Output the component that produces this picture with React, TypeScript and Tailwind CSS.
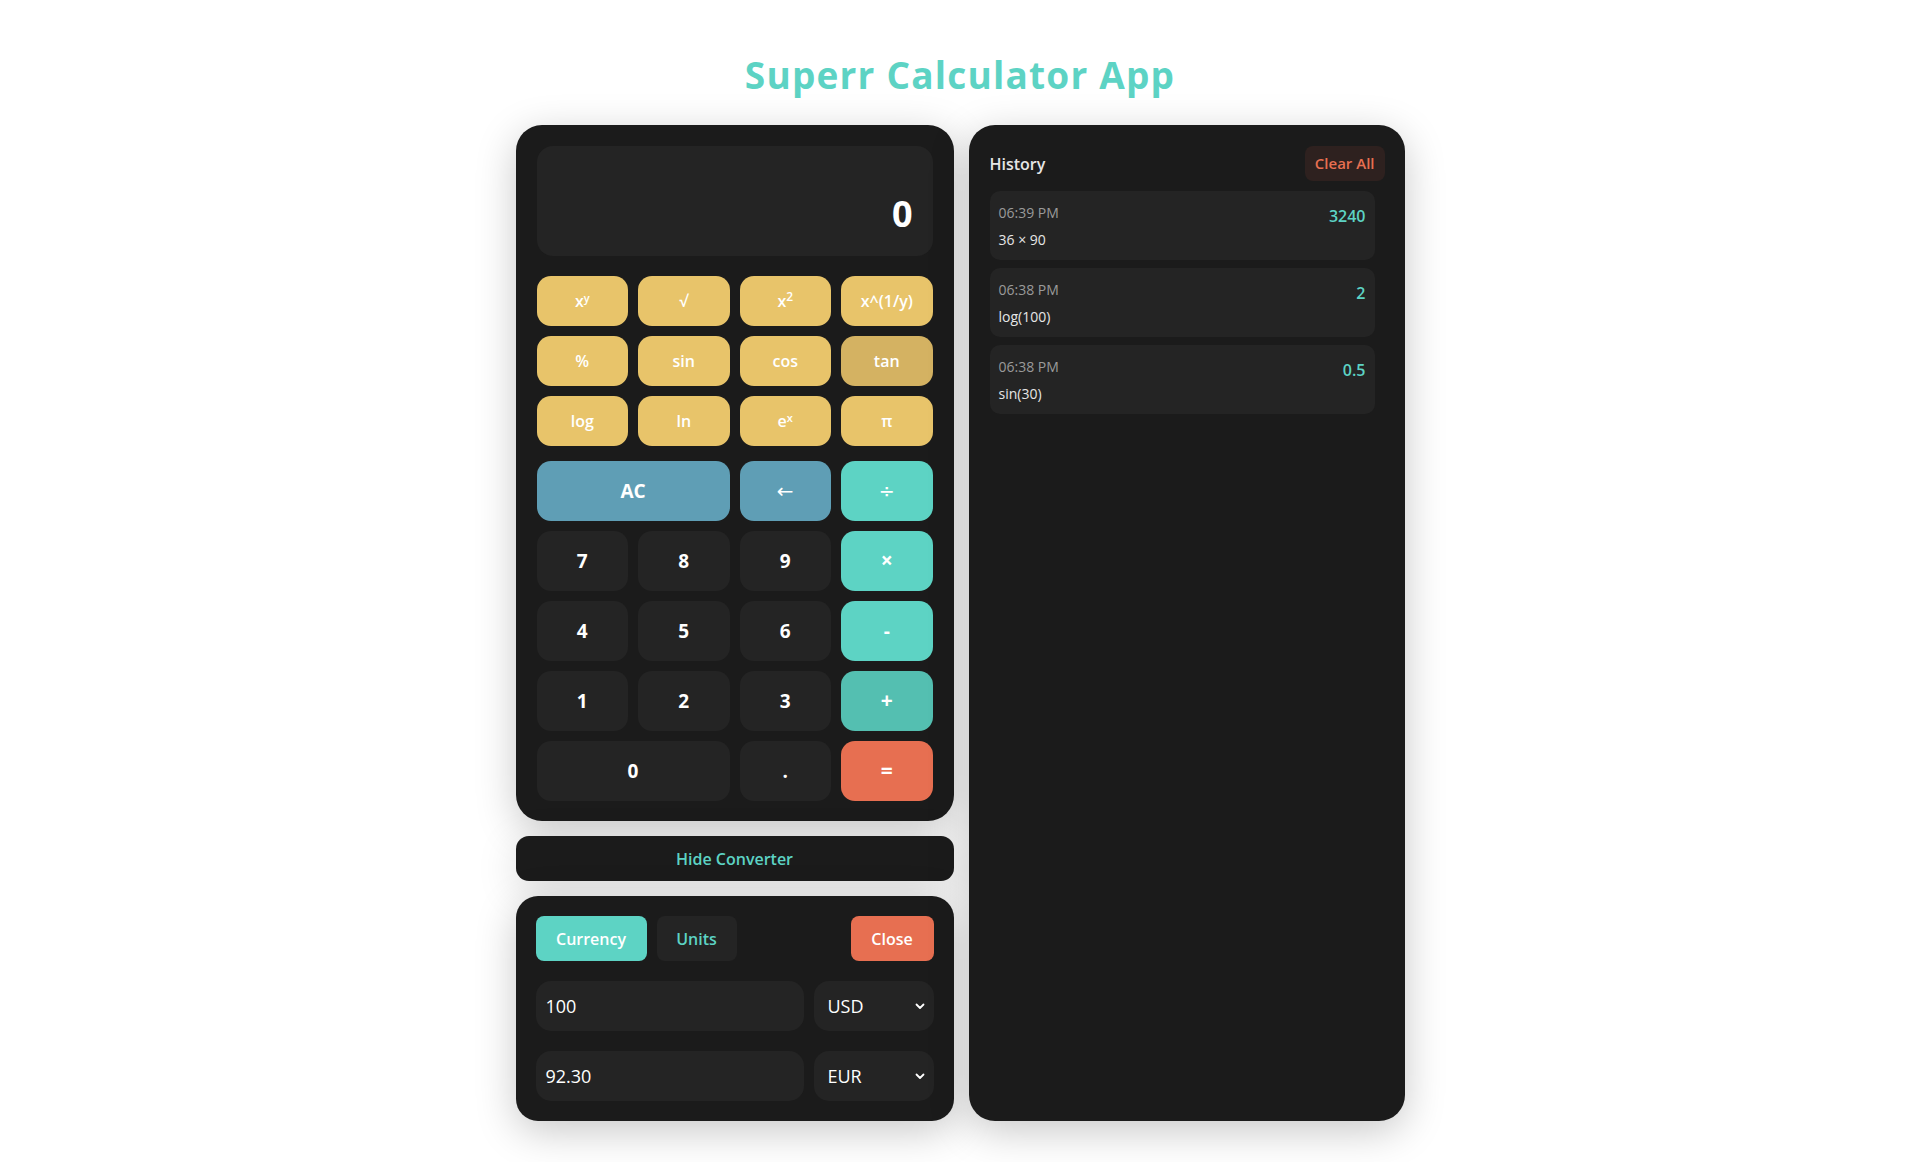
import React from "react";

const font = { fontFamily: '"Open Sans", "Noto Sans", sans-serif' };

function Btn({ children, cls }: { children: React.ReactNode; cls: string }) {
  return (
    <button className={`flex items-center justify-center rounded-[14px] ${cls}`}>{children}</button>
  );
}

const yellow = "h-[50px] bg-[#e8c46a] text-white font-semibold text-[16px]";
const num = "h-[60px] bg-[#242424] text-white font-bold text-[19px]";
const chevron = (
  <svg width="12" height="12" viewBox="0 0 12 12">
    <path d="M2.5 4.5 L6 8 L9.5 4.5" stroke="white" strokeWidth="1.8" fill="none" strokeLinecap="round" strokeLinejoin="round" />
  </svg>
);

export default function App() {
  return (
    <div className="min-h-[1162px] bg-white flex flex-col items-center" style={font}>
      <h1 className="mt-[45px] h-[60px] text-[37px] font-bold text-[#5dd3c4] tracking-[1.2px] leading-[60px]">
        Superr Calculator App
      </h1>
      <div className="mt-[20px] flex gap-[15px]">
        <div className="w-[438px] flex flex-col gap-[15px]">
          <div className="rounded-[26px] bg-[#1b1b1b] p-[21px] pb-[20px] shadow-[0_10px_40px_rgba(0,0,0,0.22)]">
            <div className="h-[110px] rounded-[16px] bg-[#242424] flex items-end justify-end px-[20px] pb-[24px]">
              <span className="text-[36px] font-bold text-white leading-none">0</span>
            </div>
            <div className="mt-[20px] grid grid-cols-4 gap-[10px]">
              <Btn cls={yellow}>
                <span>x<sup className="text-[11px]">y</sup></span>
              </Btn>
              <Btn cls={yellow}>√</Btn>
              <Btn cls={yellow}>
                <span>x<sup className="text-[12px]">2</sup></span>
              </Btn>
              <Btn cls={yellow}>x^(1/y)</Btn>
              <Btn cls={yellow}>%</Btn>
              <Btn cls={yellow}>sin</Btn>
              <Btn cls={yellow}>cos</Btn>
              <Btn cls="h-[50px] bg-[#d4b262] text-white font-semibold text-[16px]">tan</Btn>
              <Btn cls={yellow}>log</Btn>
              <Btn cls={yellow}>ln</Btn>
              <Btn cls={yellow}>
                <span>e<sup className="text-[11px]">x</sup></span>
              </Btn>
              <Btn cls={yellow}>π</Btn>
            </div>
            <div className="mt-[15px] grid grid-cols-4 gap-[10px]">
              <Btn cls="col-span-2 h-[60px] bg-[#5f9eb5] text-white font-bold text-[19px]">AC</Btn>
              <Btn cls="h-[60px] bg-[#5f9eb5] text-white font-normal">
                <span style={{ fontFamily: '"DejaVu Sans", sans-serif' }} className="text-[20px]">←</span>
              </Btn>
              <Btn cls="h-[60px] bg-[#5dd3c4] text-white font-normal">
                <span style={{ fontFamily: '"DejaVu Sans", sans-serif' }} className="text-[19px]">÷</span>
              </Btn>
              <Btn cls={num}>7</Btn>
              <Btn cls={num}>8</Btn>
              <Btn cls={num}>9</Btn>
              <Btn cls="h-[60px] bg-[#5dd3c4] text-white font-bold text-[21px]">×</Btn>
              <Btn cls={num}>4</Btn>
              <Btn cls={num}>5</Btn>
              <Btn cls={num}>6</Btn>
              <Btn cls="h-[60px] bg-[#5dd3c4] text-white font-bold text-[19px]">-</Btn>
              <Btn cls={num}>1</Btn>
              <Btn cls={num}>2</Btn>
              <Btn cls={num}>3</Btn>
              <Btn cls="h-[60px] bg-[#54bfb1] text-white font-bold text-[21px]">+</Btn>
              <Btn cls={`col-span-2 ${num}`}>0</Btn>
              <Btn cls={num}>.</Btn>
              <Btn cls="h-[60px] bg-[#e76f51] text-white font-bold text-[21px]">=</Btn>
            </div>
          </div>
          <button className="h-[45px] rounded-[13px] bg-[#1b1b1b] text-[#5dd3c4] font-semibold text-[16px] shadow-[0_10px_40px_rgba(0,0,0,0.15)]">
            Hide Converter
          </button>
          <div className="rounded-[22px] bg-[#1b1b1b] p-[20px] shadow-[0_10px_40px_rgba(0,0,0,0.22)]">
            <div className="flex items-center gap-[10px]">
              <button className="h-[45px] w-[111px] rounded-[8px] bg-[#5dd3c4] text-white font-semibold text-[16px]">Currency</button>
              <button className="h-[45px] w-[80px] rounded-[8px] bg-[#242424] text-[#5dd3c4] font-semibold text-[16px]">Units</button>
              <div className="flex-1" />
              <button className="h-[45px] w-[83px] rounded-[8px] bg-[#e76f51] text-white font-semibold text-[16px]">Close</button>
            </div>
            <div className="mt-[20px] flex gap-[10px]">
              <div className="h-[50px] flex-1 rounded-[15px] bg-[#242424] flex items-center px-[10px] text-white text-[18px]">100</div>
              <div className="h-[50px] w-[120px] rounded-[15px] bg-[#242424] flex items-center justify-between pl-[14px] pr-[8px] text-white text-[18px]">
                <span>USD</span>
                {chevron}
              </div>
            </div>
            <div className="mt-[20px] flex gap-[10px]">
              <div className="h-[50px] flex-1 rounded-[15px] bg-[#242424] flex items-center px-[10px] text-white text-[18px]">92.30</div>
              <div className="h-[50px] w-[120px] rounded-[15px] bg-[#242424] flex items-center justify-between pl-[14px] pr-[8px] text-white text-[18px]">
                <span>EUR</span>
                {chevron}
              </div>
            </div>
          </div>
        </div>
        <div className="w-[436px] h-[996px] rounded-[26px] bg-[#1b1b1b] pt-[21px] pl-[21px] pr-[20px] shadow-[0_10px_40px_rgba(0,0,0,0.22)]">
          <div className="flex items-center justify-between h-[35px]">
            <span className="text-[16px] font-semibold text-[#e6e6e6]">History</span>
            <button className="h-[35px] px-[10px] rounded-[8px] bg-[#2e211f] text-[#e76f51] text-[15px] font-semibold">Clear All</button>
          </div>
          <div className="mt-[10px] pr-[10px] flex flex-col gap-[8px]">
            {[
              ["06:39 PM", "36 × 90", "3240"],
              ["06:38 PM", "log(100)", "2"],
              ["06:38 PM", "sin(30)", "0.5"],
            ].map(([t, e, r], i) => (
              <div key={i} className="h-[69px] rounded-[10px] bg-[#242424] px-[9px] pt-[12px] flex justify-between">
                <div className="flex flex-col">
                  <span className="text-[14px] text-[#9a9a9a] leading-[20px]">{t}</span>
                  <span className="mt-[7px] text-[14px] text-[#e6e6e6] leading-[20px]">{e}</span>
                </div>
                <span className="text-[16px] font-semibold text-[#5dd3c4] leading-[22px] mt-[2px]">{r}</span>
              </div>
            ))}
          </div>
        </div>
      </div>
    </div>
  );
}
